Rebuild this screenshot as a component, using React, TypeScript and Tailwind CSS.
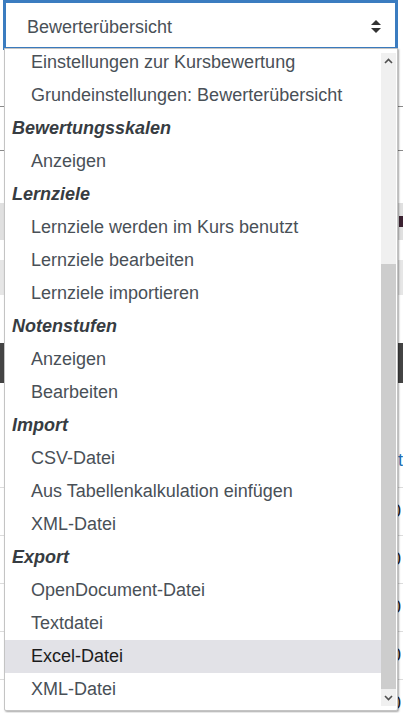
import React from 'react';

type Entry = { label: string; group?: boolean; active?: boolean };

const entries: Entry[] = [
  { label: 'Einstellungen zur Kursbewertung' },
  { label: 'Grundeinstellungen: Bewerterübersicht' },
  { label: 'Bewertungsskalen', group: true },
  { label: 'Anzeigen' },
  { label: 'Lernziele', group: true },
  { label: 'Lernziele werden im Kurs benutzt' },
  { label: 'Lernziele bearbeiten' },
  { label: 'Lernziele importieren' },
  { label: 'Notenstufen', group: true },
  { label: 'Anzeigen' },
  { label: 'Bearbeiten' },
  { label: 'Import', group: true },
  { label: 'CSV-Datei' },
  { label: 'Aus Tabellenkalkulation einfügen' },
  { label: 'XML-Datei' },
  { label: 'Export', group: true },
  { label: 'OpenDocument-Datei' },
  { label: 'Textdatei' },
  { label: 'Excel-Datei', active: true },
  { label: 'XML-Datei' },
];

const Chevron: React.FC<{ down?: boolean }> = ({ down }) => (
  <svg width="9" height="6" viewBox="0 0 9 6" className={down ? 'rotate-180' : ''}>
    <polyline points="1,5 4.5,1.5 8,5" fill="none" stroke="#505050" strokeWidth="1.6" />
  </svg>
);

const App: React.FC = () => {
  return (
    <div className="relative w-[403px] h-[713px] overflow-hidden bg-white font-['Liberation_Sans',Arial,sans-serif]">
      {/* page behind the open select */}
      <div className="flex flex-col">
        <div className="ml-[3px] w-[395px] h-[50px] border-[3px] border-[#3b7cc0] bg-white flex items-center pl-[21px] pr-[14px] pt-[4px]">
          <span className="flex-1 text-[18px] text-[#495057]">Bewerterübersicht</span>
          <svg width="10" height="14" viewBox="0 0 10 14">
            <polygon points="5,0 10,5 0,5" fill="#333" />
            <polygon points="0,8 10,8 5,13" fill="#333" />
          </svg>
        </div>
        <div className="h-[57px] border-b border-[#8a8a8a]" />
        <div className="h-[44px] border-b border-[#8a8a8a]" />
        <div className="h-[52px]" />
        <div className="h-[37px] bg-[#e0e0e0] flex justify-end items-center">
          <span className="w-[4px] h-[11px] bg-[#3a2030]" />
        </div>
        <div className="h-[20px]" />
        <div className="h-[35px] bg-[#e6e6e6]" />
        <div className="h-[48px]" />
        <div className="h-[40px] bg-[#444]" />
        <div className="h-[64px]" />
        <div className="h-[40px] flex justify-end text-[18px] text-[#1f6fb5]">
          <span>t</span>
        </div>
        {[0, 1, 2, 3, 4].map((i) => (
          <div key={i} className="h-[48px] border-t border-[#dcdcdc] flex items-center justify-end pr-[2px]">
            <span className="text-[18px] text-[#222]">0</span>
          </div>
        ))}
      </div>

      {/* open dropdown list */}
      <div className="absolute left-[4px] top-[48px] w-[394px] h-[663px] bg-white border border-[#c4c4c4] rounded-b-[2px] shadow-[1px_1px_2px_rgba(0,0,0,0.35)] flex">
        <div className="flex-1 overflow-hidden">
          <div className="-mt-[3px] flex flex-col">
            {entries.map((e, i) => (
              <div
                key={i}
                className={
                  'h-[33px] flex items-center text-[18px] whitespace-nowrap ' +
                  (e.group
                    ? 'pl-[7px] font-bold italic text-[#373c42]'
                    : e.active
                    ? 'pl-[26px] bg-[#e2e2e7] text-[#1c1c1c]'
                    : 'pl-[26px] text-[#495057]')
                }
              >
                {e.label}
              </div>
            ))}
          </div>
        </div>
        <div className="w-[15px] mr-[1px] my-[4px] flex flex-col bg-[#f0f0f0]">
          <div className="h-[16px] flex items-center justify-center">
            <Chevron />
          </div>
          <div className="flex-1 flex flex-col">
            <div className="h-[195px]" />
            <div className="flex-1 bg-[#cdcdcd]" />
          </div>
          <div className="h-[17px] flex items-center justify-center">
            <Chevron down />
          </div>
        </div>
      </div>
    </div>
  );
};

export default App;
